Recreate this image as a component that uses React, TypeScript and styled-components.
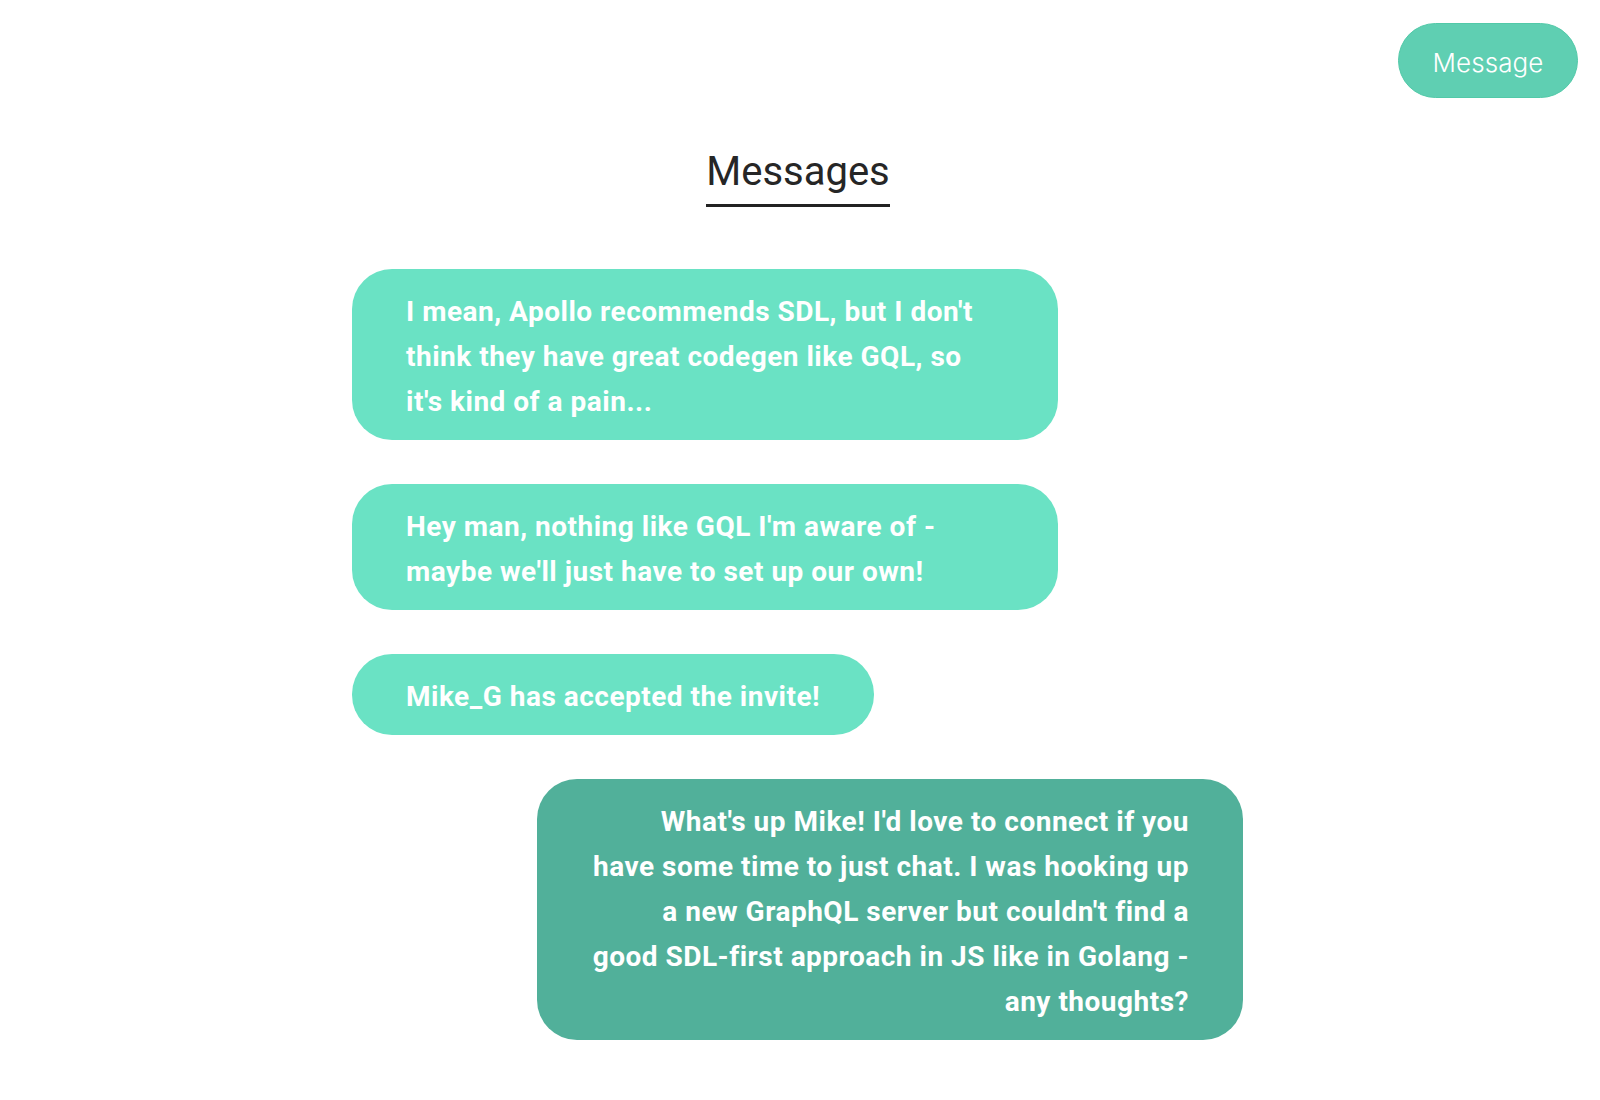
import React from "react";
import styled, { createGlobalStyle } from "styled-components";

const GlobalStyle = createGlobalStyle`
  html, body {
    margin: 0;
    padding: 0;
    background: #ffffff;
  }
  body {
    font-family: Roboto, "Noto Sans", sans-serif;
    -webkit-font-smoothing: antialiased;
  }
  * { box-sizing: border-box; }
`;

const Page = styled.div`
  display: flex;
  flex-direction: column;
  padding: 23px 22px 60px 0;
`;

const TopBar = styled.header`
  display: flex;
  justify-content: flex-end;
`;

const MessageButton = styled.button`
  height: 75px;
  width: 180px;
  border-radius: 38px;
  border: 1px solid #52c9a8;
  background: #5fcfb2;
  color: #ffffff;
  font-family: Inter, Roboto, sans-serif;
  font-weight: 300;
  font-size: 26px;
  letter-spacing: 0.1px;
  cursor: pointer;
  padding: 3px 0 0;
`;

const TitleRow = styled.div`
  display: flex;
  justify-content: center;
  margin-top: 50px;
  padding-left: 18px;
`;

const Title = styled.h1`
  margin: 0;
  font-family: Roboto, sans-serif;
  font-weight: 400;
  font-size: 40px;
  line-height: 47px;
  color: #262626;
  padding-bottom: 9px;
  border-bottom: 3px solid #222222;
`;

const Thread = styled.div`
  width: 891px;
  margin: 62px 0 0 352px;
  display: flex;
  flex-direction: column;
  gap: 44px;
`;

const Bubble = styled.div<{ $mine?: boolean; $full?: boolean }>`
  align-self: ${(p) => (p.$mine ? "flex-end" : "flex-start")};
  width: ${(p) => (p.$full ? "706px" : "auto")};
  max-width: 706px;
  padding: 20px 54px 16px;
  border-radius: 40px;
  background: ${(p) => (p.$mine ? "#51b09a" : "#6ae2c4")};
  color: #ffffff;
  font-family: Roboto, sans-serif;
  font-weight: 700;
  font-size: 28px;
  line-height: 45px;
  letter-spacing: 0.5px;
  text-align: ${(p) => (p.$mine ? "right" : "left")};
`;

const Line = styled.span`
  display: block;
  white-space: nowrap;
`;

const messages: { lines: string[]; mine?: boolean }[] = [
  {
    lines: [
      "I mean, Apollo recommends SDL, but I don't",
      "think they have great codegen like GQL, so",
      "it's kind of a pain...",
    ],
  },
  {
    lines: [
      "Hey man, nothing like GQL I'm aware of -",
      "maybe we'll just have to set up our own!",
    ],
  },
  { lines: ["Mike_G has accepted the invite!"] },
  {
    lines: [
      "What's up Mike! I'd love to connect if you",
      "have some time to just chat. I was hooking up",
      "a new GraphQL server but couldn't find a",
      "good SDL-first approach in JS like in Golang -",
      "any thoughts?",
    ],
    mine: true,
  },
];

export default function App() {
  return (
    <>
      <GlobalStyle />
      <Page>
        <TopBar>
          <MessageButton>Message</MessageButton>
        </TopBar>
        <TitleRow>
          <Title>Messages</Title>
        </TitleRow>
        <Thread>
          {messages.map((m, i) => (
            <Bubble key={i} $mine={m.mine} $full={m.lines.length > 1}>
              {m.lines.map((l, j) => (
                <Line key={j}>{l}</Line>
              ))}
            </Bubble>
          ))}
        </Thread>
      </Page>
    </>
  );
}
